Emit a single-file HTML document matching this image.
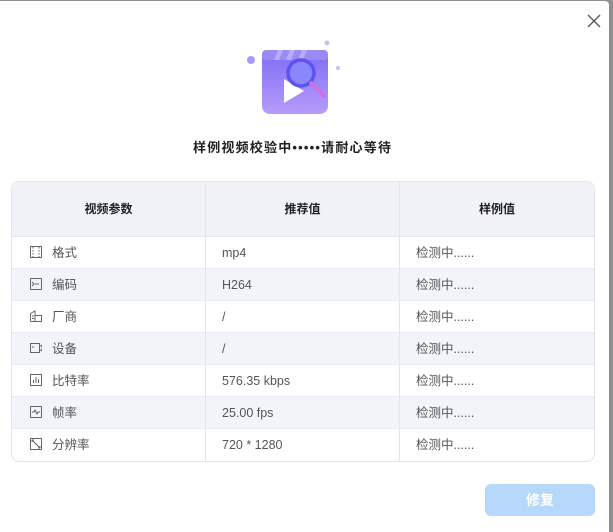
<!DOCTYPE html>
<html><head><meta charset="utf-8"><style>
*{margin:0;padding:0;box-sizing:border-box}
body{width:613px;height:532px;background:#8f8f8f;font-family:"Liberation Sans","Noto Sans CJK SC",sans-serif;position:relative;overflow:hidden}
.win{position:absolute;left:0;top:1px;width:609px;height:531px;background:#fff;border-top-right-radius:4px}
.title{position:absolute;top:136px;left:193px;width:230px;white-space:nowrap;font-size:13px;font-weight:bold;color:#222;letter-spacing:1.2px}
table{position:absolute;left:11px;top:180px;width:584px;table-layout:fixed;border-collapse:separate;border-spacing:0;border:1px solid #e3e5ec;border-radius:8px;overflow:hidden;font-size:12.5px;color:#555}
th{height:55px;background:#f1f2f8;font-size:12px;color:#222;font-weight:bold;border-right:1px solid #e3e5ec;border-bottom:1px solid #e3e5ec;line-height:16px;vertical-align:middle}
td{height:32px;line-height:16px;white-space:nowrap;vertical-align:middle;border-right:1px solid #e3e5ec;border-bottom:1px solid #e8eaf0;padding-left:16px;overflow:hidden}
tr td:last-child,tr th:last-child{border-right:none}
tr:last-child td{border-bottom:none}
tr.s td{background:#f3f4f9}
td:first-child{padding-left:18px}
.ic{display:inline-block;width:12px;height:12px;vertical-align:-1px;margin-right:10px}
.btn{position:absolute;left:485px;top:483px;width:110px;height:32px;background:#b6d9fb;border-radius:6px;color:#fff;font-size:14px;font-weight:bold;text-align:center;line-height:32px}
</style></head><body>
<div class="win">
<svg style="position:absolute;left:587px;top:13px" width="14" height="14"><path d="M1 1L13 13M13 1L1 13" stroke="#555" stroke-width="1.3"/></svg>
<svg style="position:absolute;left:240px;top:35px" width="110" height="85">
<defs><linearGradient id="g" x1="0" y1="0" x2="0" y2="1"><stop offset="0" stop-color="#7c6cf6"/><stop offset="1" stop-color="#b79cfb"/></linearGradient></defs>
<circle cx="11" cy="24" r="4" fill="#a99af8"/><circle cx="87" cy="7" r="2.5" fill="#c8bcfb"/><circle cx="98" cy="32" r="2" fill="#c8bcfb"/>
<rect x="22" y="14" width="66" height="64" rx="8" fill="url(#g)"/>
<rect x="22" y="14" width="66" height="10" rx="4" fill="#9a8af8"/>
<path d="M34 24l4-10h5l-4 10zM46 24l4-10h5l-4 10zM58 24l4-10h5l-4 10z" fill="#b9adfb"/>
<path d="M44 43v24l20-12z" fill="#fff"/>
<circle cx="61" cy="37" r="13" fill="#8a86fb" stroke="#5e52f0" stroke-width="3.5"/>
<path d="M71 47l13 13" stroke="#d070e0" stroke-width="3.5" stroke-linecap="round"/>
</svg>
<div class="title">样例视频校验中•••••请耐心等待</div>
<table>
<colgroup><col style="width:194px"><col style="width:194px"><col style="width:194px"></colgroup>
<tr><th>视频参数</th><th>推荐值</th><th>样例值</th></tr>
<tr><td><svg class="ic"><rect x="0.5" y="0.5" width="11" height="11" fill="none" stroke="#666"/><path d="M3 1v10M9 1v10" stroke="#666" stroke-dasharray="1.5 1.5"/></svg>格式</td><td>mp4</td><td>检测中......</td></tr>
<tr class="s"><td><svg class="ic"><rect x="0.5" y="0.5" width="11" height="11" fill="none" stroke="#666"/><path d="M2 4l2 2-2 2M5 6h4" stroke="#666" fill="none"/></svg>编码</td><td>H264</td><td>检测中......</td></tr>
<tr><td><svg class="ic"><path d="M0.5 11.5V3.5L5 1v10.5M0.5 11.5h11V5.5H5M2 6h2M2 8.5h2" stroke="#666" fill="none"/></svg>厂商</td><td>/</td><td>检测中......</td></tr>
<tr class="s"><td><svg class="ic"><rect x="0.5" y="1.5" width="9" height="9" fill="none" stroke="#666"/><path d="M10 4l2-1v6l-2-1M3 4v2" stroke="#666" fill="none"/></svg>设备</td><td>/</td><td>检测中......</td></tr>
<tr><td><svg class="ic"><rect x="0.5" y="0.5" width="11" height="11" fill="none" stroke="#666"/><path d="M3.5 9V6M6 9V3M8.5 9V5" stroke="#666"/></svg>比特率</td><td>576.35 kbps</td><td>检测中......</td></tr>
<tr class="s"><td><svg class="ic"><rect x="0.5" y="0.5" width="11" height="11" fill="none" stroke="#666"/><path d="M2 6h2l1-2 2 4 1-2h2" stroke="#666" fill="none"/></svg>帧率</td><td>25.00 fps</td><td>检测中......</td></tr>
<tr><td><svg class="ic"><rect x="0.5" y="0.5" width="11" height="11" fill="none" stroke="#666"/><path d="M2 2l8 8M2 2h2M2 2v2M10 10H8M10 10V8" stroke="#666" fill="none"/></svg>分辨率</td><td>720 * 1280</td><td>检测中......</td></tr>
</table>
<div class="btn">修复</div>
</div>
</body></html>
